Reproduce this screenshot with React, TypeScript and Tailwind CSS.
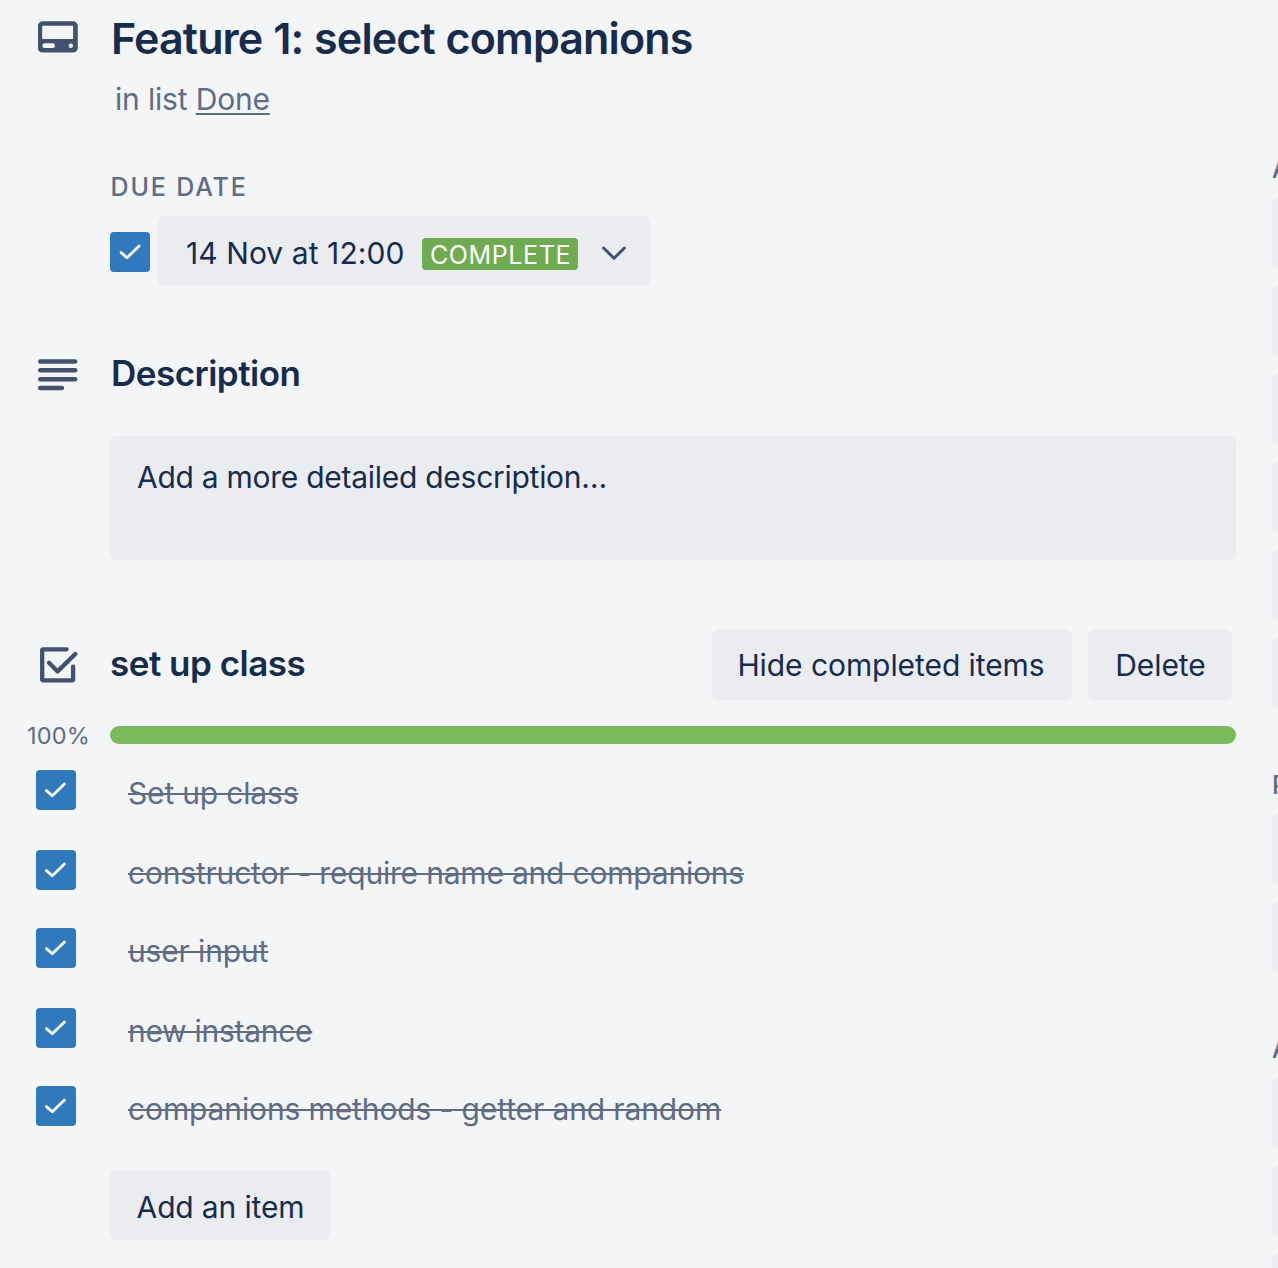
import type { ReactNode } from "react";

function CardIcon() {
  return (
    <svg className="block" width="40" height="32" viewBox="38 21 40 32">
      <path
        fill="#42526e"
        fillRule="evenodd"
        d="M42.500 21.300h30.700a4.600 4.600 0 0 1 4.600 4.600v22a4.600 4.600 0 0 1-4.600 4.600H42.500a4.600 4.600 0 0 1-4.600-4.600V25.900a4.600 4.600 0 0 1 4.600-4.600zM42.200 25.800v13.200h30.900V25.800zM44.700 43.300a2.400 2.400 0 0 0 0 4.800h7.900a2.400 2.400 0 0 0 0-4.800zM70.800 43.500a2.200 2.200 0 1 0 0 4.400a2.200 2.200 0 0 0 0-4.400z"
      />
    </svg>
  );
}

function DescriptionIcon() {
  return (
    <svg className="block" width="40" height="32" viewBox="0 0 40 32" fill="#42526e">
      <rect x="0" y="0.2" width="39.400" height="4.600" rx="2.300" />
      <rect x="0" y="9" width="39.400" height="4.600" rx="2.300" />
      <rect x="0" y="17.900" width="39.400" height="4.600" rx="2.300" />
      <rect x="0" y="26.700" width="26.200" height="4.600" rx="2.300" />
    </svg>
  );
}

function ChecklistIcon() {
  return (
    <svg
      className="block"
      width="40"
      height="38"
      viewBox="38 646 40 38"
      fill="none"
      stroke="#42526e"
      strokeWidth="4.300"
      strokeLinecap="round"
      strokeLinejoin="round"
    >
      <path d="M66.600 649.300H43.200a1 1 0 0 0-1 1V679.300a1 1 0 0 0 1 1H72.100a1 1 0 0 0 1-1V666.700" />
      <path d="M49 662.800L57.600 671.400L75.300 654" />
    </svg>
  );
}

function Checkbox({ d }: { d: string }) {
  return (
    <span role="checkbox" aria-checked="true" className="block size-10 shrink-0 rounded bg-[#2f79bc]">
      <svg className="block" width="40" height="40" viewBox="0 0 40 40" fill="none" stroke="#fff" strokeWidth="2.800" strokeLinecap="round" strokeLinejoin="round">
        <path d={d} />
      </svg>
    </span>
  );
}

function Button({ className, children }: { className: string; children: ReactNode }) {
  return (
    <button className={`flex h-[70px] items-center justify-center rounded-md bg-[#ebecf0] text-[30px] leading-[70px] whitespace-nowrap ${className}`}>
      {children}
    </button>
  );
}

const items = [
  { text: "Set up class", cls: "mb-10 tracking-[-0.18px]" },
  { text: "constructor - require name and companions", cls: "mb-[38px] tracking-[-0.2px]" },
  { text: "user input", cls: "mb-10 tracking-[-0.15px]" },
  { text: "new instance", cls: "mb-[38px] tracking-[-0.28px]" },
  { text: "companions methods - getter and random", cls: "tracking-[-0.12px]" },
];

function SideGroup({ label, count, className }: { label: string; count: number; className: string }) {
  return (
    <section className={className}>
      <h3 className="mb-[14px] h-[30px] text-[25px] leading-[30px] font-medium text-[#5e6c84]">{label}</h3>
      <div className="flex flex-col gap-[18px]">
        {Array.from({ length: count }, (_, i) => (
          <div key={i} className="h-[70px] w-[336px] rounded-md bg-[#ebecf0]" />
        ))}
      </div>
    </section>
  );
}

export default function App() {
  return (
    <div className="flex h-[1268px] w-[1278px] overflow-hidden bg-[#f4f5f7] font-['Inter',sans-serif] text-[#172b4d]">
      <main className="w-[1236px] shrink-0">
        <header className="flex">
          <div className="w-[110px] shrink-0 pt-[21px] pl-[38px]">
            <CardIcon />
          </div>
          <div>
            <h1 className="h-[76px] pl-px text-[43px] leading-[77px] font-semibold tracking-[-0.87px] [word-spacing:0.8px]">Feature 1: select companions</h1>
            <p className="h-[46px] pl-[5px] text-[30px] leading-[46px] tracking-[-0.17px] text-[#5e6c84]">
              in list <a className="underline decoration-2 underline-offset-[3px]">Done</a>
            </p>
          </div>
        </header>

        <section className="mt-[50px] pl-[110px]">
          <h3 className="h-[30px] pl-[0.5px] text-[25px] leading-[30px] font-medium tracking-[1.85px] text-[#5e6c84]">DUE DATE</h3>
          <div className="mt-[14px] flex h-[70px] items-center">
            <div className="mt-[2px]">
              <Checkbox d="M11.100 20.600L17 25.800L29.100 14" />
            </div>
            <button className="ml-2 flex h-[70px] w-[492px] items-center rounded-md bg-[#ebecf0] pt-[3px] pl-7 text-left">
              <span className="w-[236px] text-[30px] leading-10 tracking-[0.07px] whitespace-nowrap">14 Nov at 12:00</span>
              <span className="mt-[3px] h-8 w-[156px] rounded bg-[#6fab50] pt-px pl-2 text-[25px] leading-8 tracking-[0.6px] text-white">COMPLETE</span>
              <svg className="ml-6 block" width="24" height="16" viewBox="602 245 24 16" fill="none" stroke="#42526e" strokeWidth="3" strokeLinecap="round" strokeLinejoin="round">
                <path d="M603.600 248L614 258.300L624.400 248" />
              </svg>
            </button>
          </div>
        </section>

        <section className="mt-[60px]">
          <div className="flex h-[54px] items-center">
            <div className="w-[110px] pl-[38px] pt-[4px]">
              <DescriptionIcon />
            </div>
            <h2 className="pl-px text-[35px] leading-[54px] font-semibold tracking-[-0.52px]">Description</h2>
          </div>
          <div className="mt-9 ml-[110px] h-[124px] rounded-md bg-[#ebecf0] pt-[21px] pl-[27px] text-[30px] leading-10 tracking-[-0.27px]">
            Add a more detailed description…
          </div>
        </section>

        <section className="mt-[70px]">
          <div className="flex h-[70px] items-center pr-1">
            <div className="w-[110px] shrink-0 pl-[38px]">
              <ChecklistIcon />
            </div>
            <h2 className="flex-1 pb-[4px] text-[35px] leading-[54px] font-semibold tracking-[-0.5px]">set up class</h2>
            <Button className="mr-4 w-[360px] pr-[2px] tracking-[-0.07px]">Hide completed items</Button>
            <Button className="w-36 pl-px tracking-[-0.08px]">Delete</Button>
          </div>
          <div className="mt-[26px] flex h-[18px] items-center">
            <span className="w-[110px] shrink-0 pt-[2px] pl-[27px] text-[23.500px] leading-[18px] tracking-[0.2px] text-[#5e6c84]">100%</span>
            <div className="h-[18px] flex-1 rounded-full bg-[#7bbb5e]" />
          </div>
          <ul className="mt-[26px]">
            {items.map(({ text, cls }) => (
              <li key={text} className={`flex h-10 pl-9 text-[30px] leading-[46px] text-[#5e6c84] ${cls}`}>
                <Checkbox d="M10.400 20.600L16.300 25.800L28.400 14" />
                <span className="ml-[52px] whitespace-nowrap line-through decoration-[2px]">{text}</span>
              </li>
            ))}
          </ul>
          <Button className="mt-11 ml-[110px] w-[220px] pt-[4px] pl-px tracking-[-0.15px]">Add an item</Button>
        </section>
      </main>

      <aside className="ml-9 w-[336px] shrink-0">
        <SideGroup className="mt-[154px]" label="A" count={6} />
        <SideGroup className="mt-[62px]" label="P" count={2} />
        <SideGroup className="mt-[62px]" label="A" count={3} />
      </aside>
    </div>
  );
}
